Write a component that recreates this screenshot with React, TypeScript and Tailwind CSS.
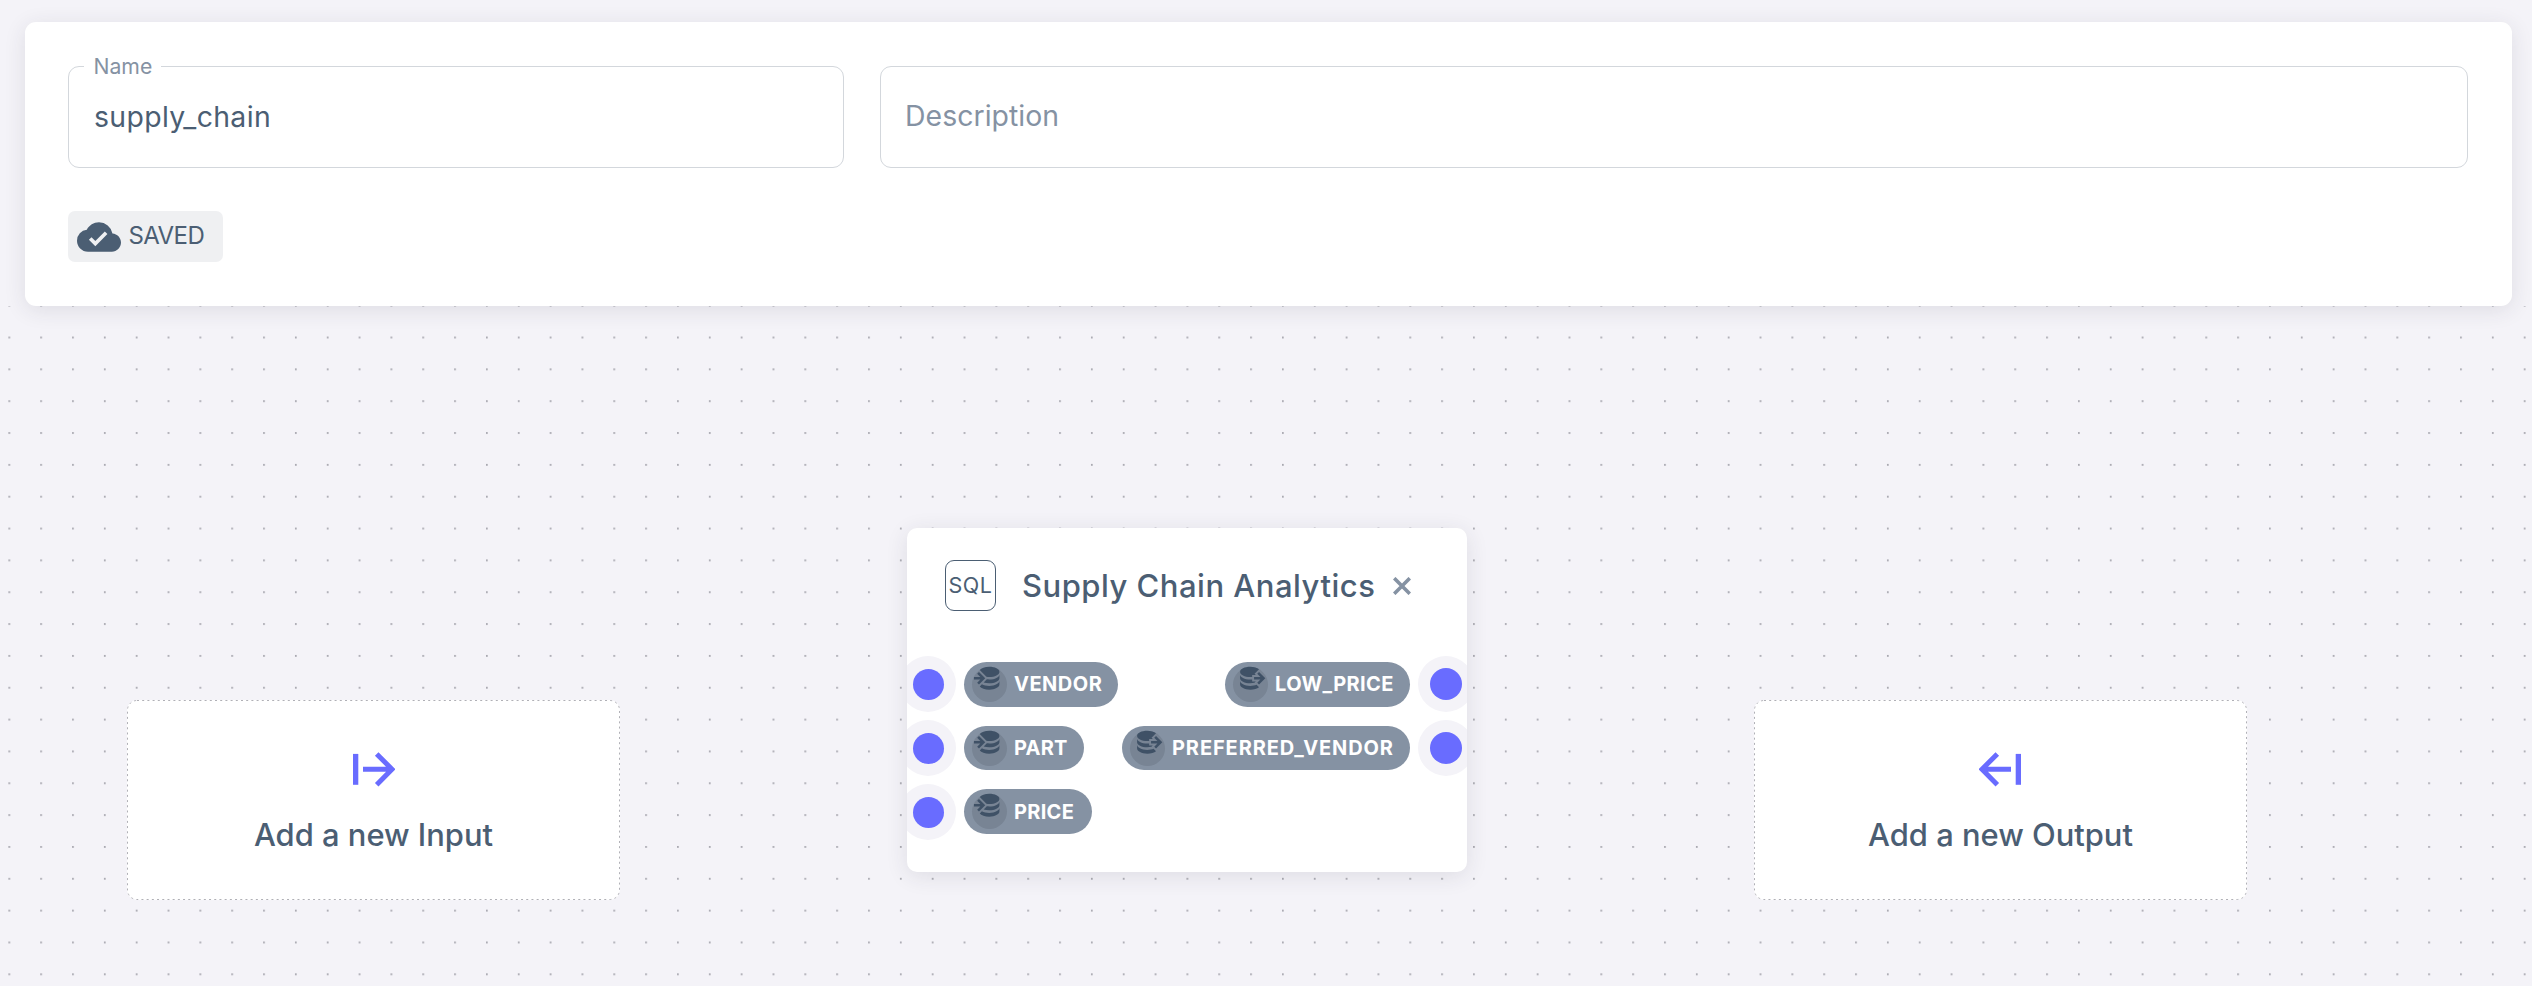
import React from "react";
import { MdCloudDone } from "react-icons/md";

const IMPORT_PATH =
  "M12 3C8.59 3 5.69 4.07 4.54 5.57L9.79 10.82C10.5 10.93 11.22 11 12 11C16.42 11 20 9.21 20 7S16.42 3 12 3M3.92 7.08L2.5 8.5L5 11H0V13H5L2.5 15.5L3.92 16.92L8.84 12M20 9C20 11.21 16.42 13 12 13C11.34 13 10.7 12.95 10.09 12.87L7.62 15.34C8.88 15.75 10.38 16 12 16C16.42 16 20 14.21 20 12M20 14C20 16.21 16.42 18 12 18C9.72 18 7.67 17.5 6.21 16.75L4.53 18.43C5.68 19.93 8.59 21 12 21C16.42 21 20 19.21 20 17";
const EXPORT_PATH =
  "M12 3C7.58 3 4 4.79 4 7C4 9.21 7.58 11 12 11C12.5 11 13 10.97 13.5 10.92V9.5H16.39L15.39 8.5L18.9 5C17.5 3.8 14.94 3 12 3M18.92 7.08L17.5 8.5L20 11H15V13H20L17.5 15.5L18.92 16.92L23.84 12M4 9V12C4 14.21 7.58 16 12 16C13.17 16 14.26 15.85 15.25 15.63L16.38 14.5H13.5V12.92C13 12.97 12.5 13 12 13C7.58 13 4 11.21 4 9M4 14V17C4 19.21 7.58 21 12 21C14.94 21 17.5 20.2 18.9 19L17 17.1C15.61 17.66 13.9 18 12 18C7.58 18 4 16.21 4 14Z";

function Handle({ size }: { size: string }) {
  return (
    <div className="flex size-14 shrink-0 items-center justify-center rounded-full bg-[#f4f3f8]">
      <div className={`rounded-full bg-[#696cff] ${size}`} />
    </div>
  );
}

function TableChip({ label, kind, className }: { label: string; kind: "input" | "output"; className: string }) {
  return (
    <div className={`flex shrink-0 items-center rounded-full bg-[#8592a3] pl-2 text-[20px] font-bold leading-6 text-white ${className}`}>
      <div className="size-[35px] shrink-0 rounded-full bg-[#788494]">
        <svg viewBox="0 0 24 24" className="-mt-1 ml-[2px] size-[30.5px] fill-[#3f5166]">
          <path d={kind === "input" ? IMPORT_PATH : EXPORT_PATH} />
        </svg>
      </div>
      <span className="ml-[7px] whitespace-nowrap">{label}</span>
    </div>
  );
}

function AddCard({ label, output, className }: { label: string; output?: boolean; className: string }) {
  return (
    <div className={`absolute top-[394px] flex h-[200px] w-[493px] flex-col items-center rounded-[10px] bg-white pt-[52px] ${className}`}>
      <svg className="absolute inset-0 h-full w-full">
        <rect x="0.5" y="0.5" width="492" height="199" rx="9.5" fill="none" stroke="#b0b0b6" strokeDasharray="2 3.2" />
      </svg>
      <svg viewBox="0 0 42 36" className={`h-9 w-[42px] ${output ? "-scale-x-100 -translate-x-px" : ""}`}>
        <path d="M0 1.9H5.3V32.8H0Z" fill="#696cff" />
        <path d="M10 17.3H38.2M23.7 1.9L39 17.3L23.7 32.7" fill="none" stroke="#696cff" strokeWidth="5" />
      </svg>
      <span className="mt-[27px] whitespace-nowrap text-[30.9px] font-medium leading-10 text-[#4b5e73]">{label}</span>
    </div>
  );
}

export default function App() {
  return (
    <div className="flex h-[986px] w-[2532px] flex-col overflow-hidden bg-[#f4f3f8] font-['Inter','Liberation_Sans',sans-serif] text-[#4b5e73]">
      <header className="relative z-10 h-[306px] pl-[25px] pr-5 pt-[22px]">
        <div className="h-[284px] rounded-[11px] bg-white px-[43px] pt-11 shadow-[0_4px_22px_rgba(50,45,60,0.11)]">
          <div className="flex gap-9">
            <div className="relative flex h-[102px] w-[776px] items-center rounded-[11px] border border-[#d3d7dc] pl-[25px]">
              <span className="absolute -top-[15px] left-[15px] bg-white pl-[9.5px] pr-[9px] text-[21.2px] leading-7 text-[#8592a3]">Name</span>
              <span className="text-[28.4px] leading-9 tracking-[0.35px]">supply_chain</span>
            </div>
            <div className="flex h-[102px] w-[1588px] items-center rounded-[11px] border border-[#d3d7dc] pb-[2px] pl-[24px]">
              <span className="text-[28.4px] leading-9 tracking-[0.05px] text-[#8592a3]">Description</span>
            </div>
          </div>
          <div className="mt-[43px] flex h-[51px] w-[155px] items-center rounded-[7px] bg-[#eff0f2] pl-[9px]">
            <MdCloudDone className="size-11 shrink-0" />
            <span className="ml-[7.5px] pb-px text-[24px] leading-8 tracking-[-0.6px]">SAVED</span>
          </div>
        </div>
      </header>

      <main className="relative flex-1">
        <svg className="absolute inset-0 h-full w-full">
          <defs>
            <pattern id="dots" x="8.4" y="-1.3" width="31.84" height="31.84" patternUnits="userSpaceOnUse">
              <circle cx="0.9" cy="0.9" r="0.9" fill="#91919a" />
            </pattern>
          </defs>
          <rect width="100%" height="100%" fill="url(#dots)" />
        </svg>

        <AddCard label="Add a new Input" className="left-[127px]" />

        <section className="absolute left-[907px] top-[222px] h-[344px] w-[560px] overflow-hidden rounded-[10px] bg-white shadow-[0_4px_22px_rgba(50,45,60,0.11)]">
          <div className="flex items-center pl-[38px] pt-8">
            <div className="flex size-[51px] items-center justify-center rounded-[9px] border border-[#4b5e73] text-[21.5px] tracking-[0.6px]">SQL</div>
            <h2 className="ml-[26px] w-[352px] whitespace-nowrap text-[31px] font-medium leading-10 tracking-[0.5px]">Supply Chain Analytics</h2>
            <svg viewBox="0 0 18 18" className="ml-[19px] size-[18px]">
              <path d="M1.2 1.2L16.8 16.8M16.8 1.2L1.2 16.8" stroke="#8592a3" strokeWidth="3.6" fill="none" />
            </svg>
          </div>
          <div className="mt-[45px] flex justify-between">
            <div className="-ml-[7px] flex flex-col gap-2">
              <div className="flex items-center gap-2"><Handle size="size-[31px]" /><TableChip kind="input" label="VENDOR" className="h-[45px] w-[154px] tracking-[0.5px]" /></div>
              <div className="flex items-center gap-2"><Handle size="size-[31px]" /><TableChip kind="input" label="PART" className="h-11 w-[120px] tracking-[0.2px]" /></div>
              <div className="flex items-center gap-2"><Handle size="size-[31px]" /><TableChip kind="input" label="PRICE" className="mb-px h-[45px] w-[128px] tracking-[0.3px]" /></div>
            </div>
            <div className="-mr-[7px] flex flex-col items-end gap-2">
              <div className="flex items-center gap-2"><TableChip kind="output" label="LOW_PRICE" className="h-[45px] w-[185px] tracking-[0.4px]" /><Handle size="size-8" /></div>
              <div className="flex items-center gap-2"><TableChip kind="output" label="PREFERRED_VENDOR" className="h-11 w-[288px] tracking-[0.9px]" /><Handle size="size-8" /></div>
            </div>
          </div>
        </section>

        <AddCard label="Add a new Output" output className="left-[1754px]" />
      </main>
    </div>
  );
}
